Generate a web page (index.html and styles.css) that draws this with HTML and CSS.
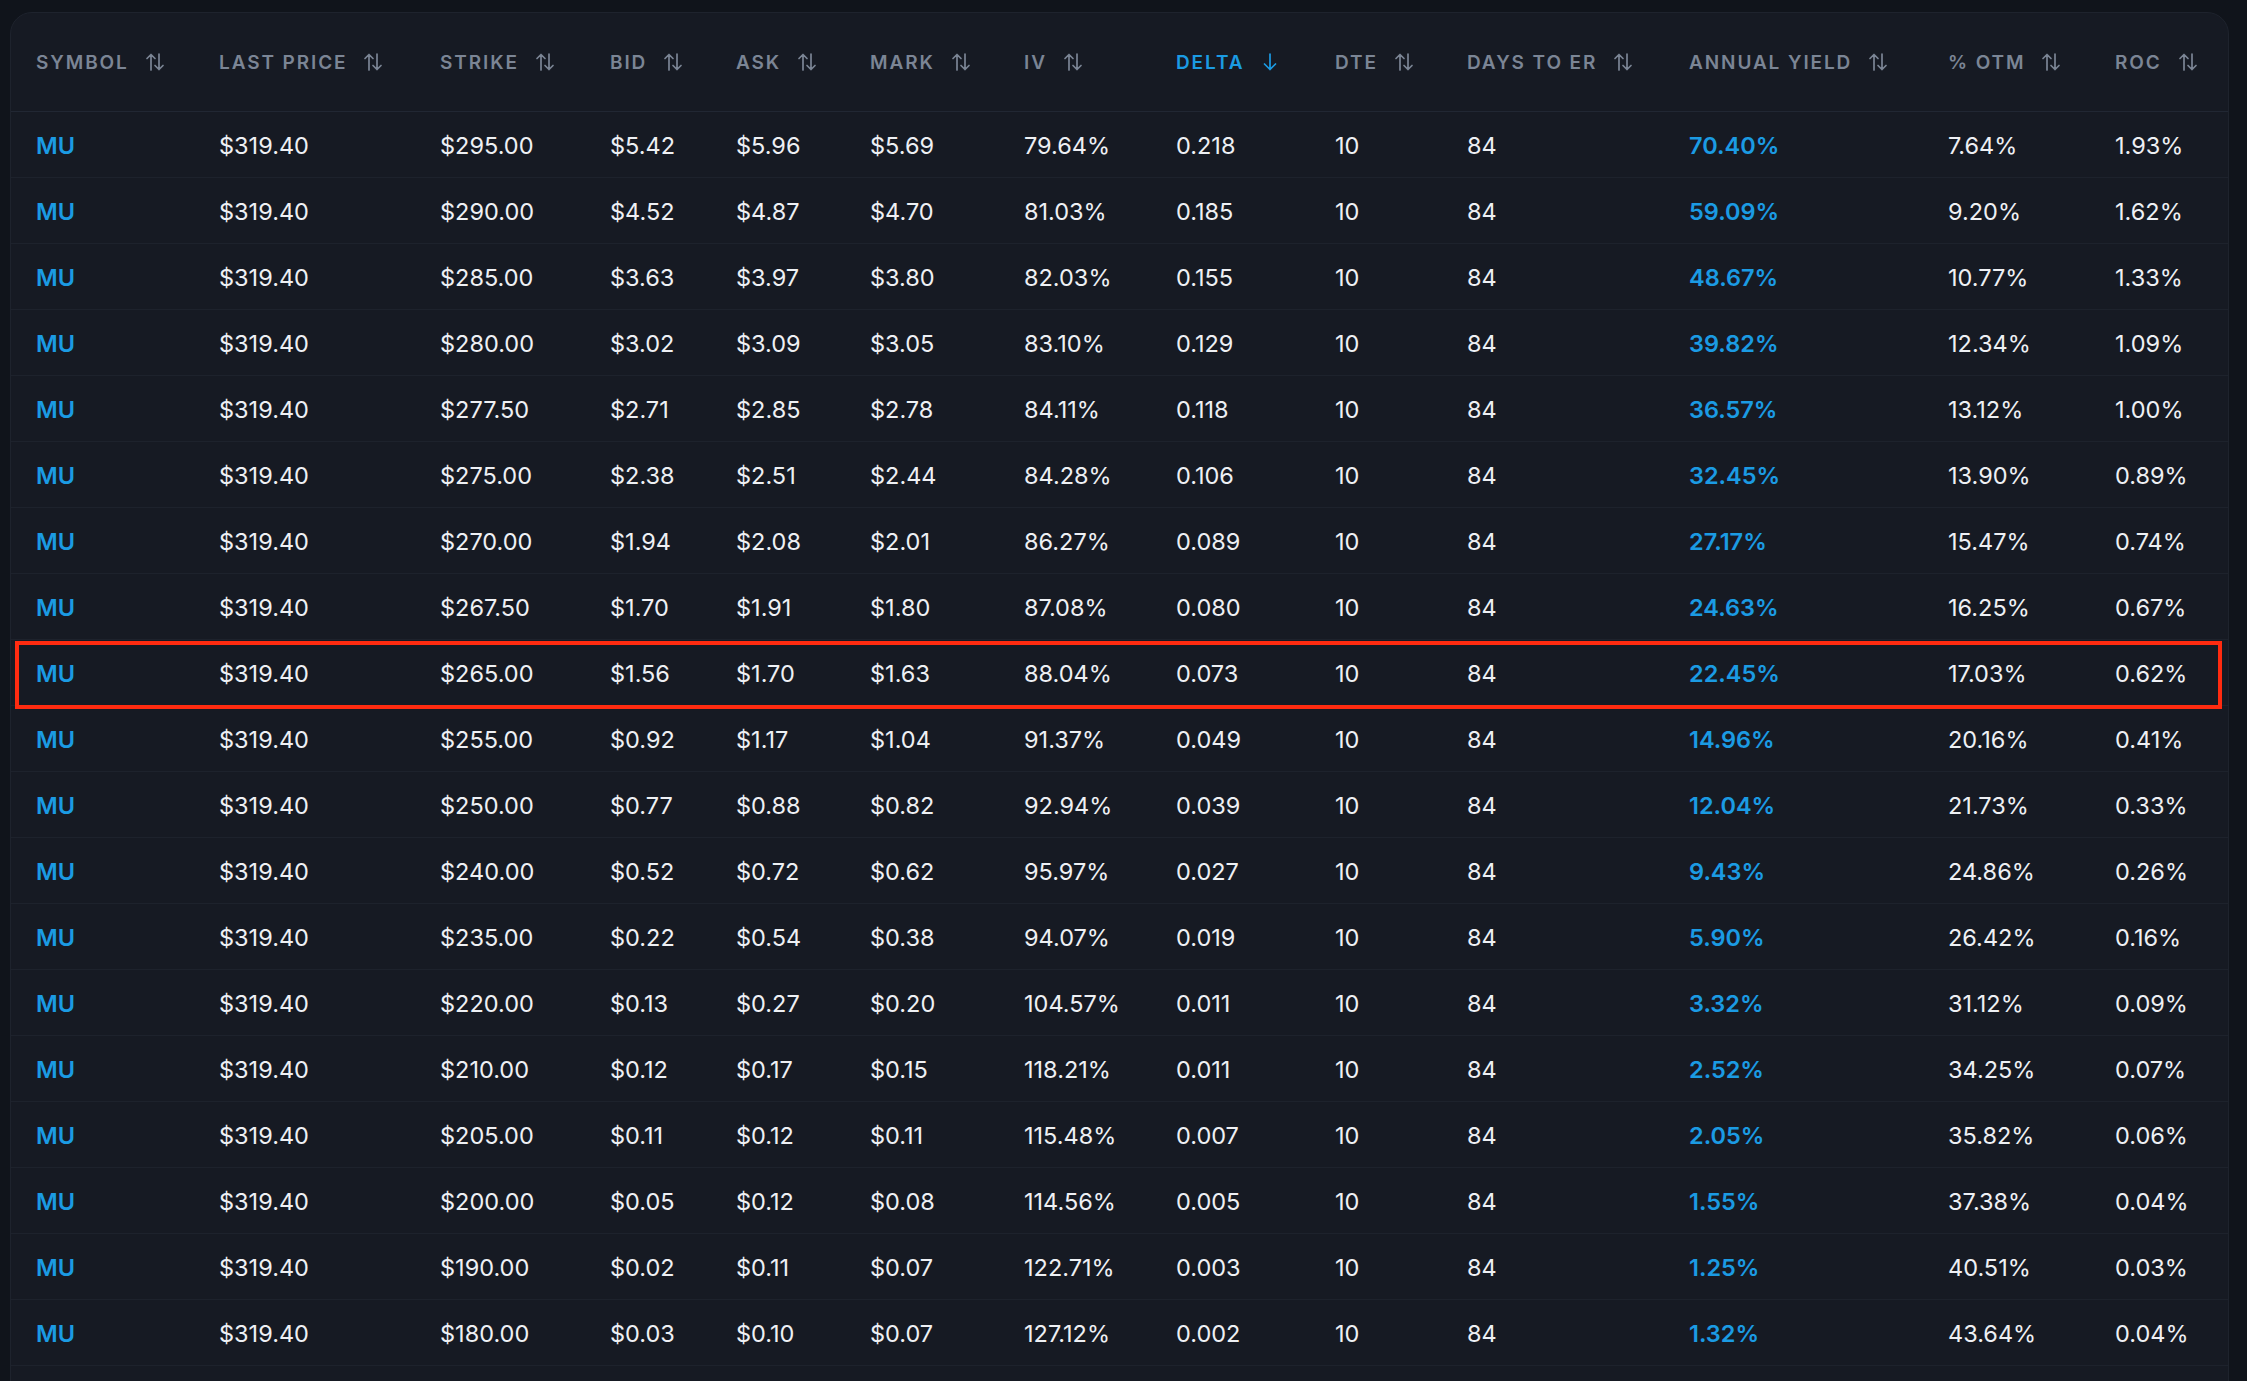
FILE: index.html
```html
<!DOCTYPE html>
<html lang="en">
<head>
    <meta charset="UTF-8">
    <meta name="viewport" content="width=device-width, initial-scale=1.0">
    <title>Option Chain</title>
    <link rel="stylesheet" href="styles.css">
</head>
<body>
    <div class="card">
        <div class="row head">
            <div class="cell">SYMBOL <svg class="sort" viewBox="0 0 20 18"><path d="M6 17V1.5M2 5.5l4-4 4 4M14 1v15.5M10 12.5l4 4 4-4"/></svg></div>
            <div class="cell">LAST PRICE <svg class="sort" viewBox="0 0 20 18"><path d="M6 17V1.5M2 5.5l4-4 4 4M14 1v15.5M10 12.5l4 4 4-4"/></svg></div>
            <div class="cell">STRIKE <svg class="sort" viewBox="0 0 20 18"><path d="M6 17V1.5M2 5.5l4-4 4 4M14 1v15.5M10 12.5l4 4 4-4"/></svg></div>
            <div class="cell">BID <svg class="sort" viewBox="0 0 20 18"><path d="M6 17V1.5M2 5.5l4-4 4 4M14 1v15.5M10 12.5l4 4 4-4"/></svg></div>
            <div class="cell">ASK <svg class="sort" viewBox="0 0 20 18"><path d="M6 17V1.5M2 5.5l4-4 4 4M14 1v15.5M10 12.5l4 4 4-4"/></svg></div>
            <div class="cell">MARK <svg class="sort" viewBox="0 0 20 18"><path d="M6 17V1.5M2 5.5l4-4 4 4M14 1v15.5M10 12.5l4 4 4-4"/></svg></div>
            <div class="cell">IV <svg class="sort" viewBox="0 0 20 18"><path d="M6 17V1.5M2 5.5l4-4 4 4M14 1v15.5M10 12.5l4 4 4-4"/></svg></div>
            <div class="cell active">DELTA <svg class="sort" viewBox="0 0 20 18"><path d="M10 1v15.5M4.5 11l5.5 5.5 5.5-5.5"/></svg></div>
            <div class="cell">DTE <svg class="sort" viewBox="0 0 20 18"><path d="M6 17V1.5M2 5.5l4-4 4 4M14 1v15.5M10 12.5l4 4 4-4"/></svg></div>
            <div class="cell">DAYS TO ER <svg class="sort" viewBox="0 0 20 18"><path d="M6 17V1.5M2 5.5l4-4 4 4M14 1v15.5M10 12.5l4 4 4-4"/></svg></div>
            <div class="cell">ANNUAL YIELD <svg class="sort" viewBox="0 0 20 18"><path d="M6 17V1.5M2 5.5l4-4 4 4M14 1v15.5M10 12.5l4 4 4-4"/></svg></div>
            <div class="cell">% OTM <svg class="sort" viewBox="0 0 20 18"><path d="M6 17V1.5M2 5.5l4-4 4 4M14 1v15.5M10 12.5l4 4 4-4"/></svg></div>
            <div class="cell">ROC <svg class="sort" viewBox="0 0 20 18"><path d="M6 17V1.5M2 5.5l4-4 4 4M14 1v15.5M10 12.5l4 4 4-4"/></svg></div>
        </div>

        <div class="row"><div class="cell sym">MU</div><div class="cell">$319.40</div><div class="cell">$295.00</div><div class="cell">$5.42</div><div class="cell">$5.96</div><div class="cell">$5.69</div><div class="cell">79.64%</div><div class="cell">0.218</div><div class="cell">10</div><div class="cell">84</div><div class="cell yield">70.40%</div><div class="cell">7.64%</div><div class="cell">1.93%</div></div>
        <div class="row"><div class="cell sym">MU</div><div class="cell">$319.40</div><div class="cell">$290.00</div><div class="cell">$4.52</div><div class="cell">$4.87</div><div class="cell">$4.70</div><div class="cell">81.03%</div><div class="cell">0.185</div><div class="cell">10</div><div class="cell">84</div><div class="cell yield">59.09%</div><div class="cell">9.20%</div><div class="cell">1.62%</div></div>
        <div class="row"><div class="cell sym">MU</div><div class="cell">$319.40</div><div class="cell">$285.00</div><div class="cell">$3.63</div><div class="cell">$3.97</div><div class="cell">$3.80</div><div class="cell">82.03%</div><div class="cell">0.155</div><div class="cell">10</div><div class="cell">84</div><div class="cell yield">48.67%</div><div class="cell">10.77%</div><div class="cell">1.33%</div></div>
        <div class="row"><div class="cell sym">MU</div><div class="cell">$319.40</div><div class="cell">$280.00</div><div class="cell">$3.02</div><div class="cell">$3.09</div><div class="cell">$3.05</div><div class="cell">83.10%</div><div class="cell">0.129</div><div class="cell">10</div><div class="cell">84</div><div class="cell yield">39.82%</div><div class="cell">12.34%</div><div class="cell">1.09%</div></div>
        <div class="row"><div class="cell sym">MU</div><div class="cell">$319.40</div><div class="cell">$277.50</div><div class="cell">$2.71</div><div class="cell">$2.85</div><div class="cell">$2.78</div><div class="cell">84.11%</div><div class="cell">0.118</div><div class="cell">10</div><div class="cell">84</div><div class="cell yield">36.57%</div><div class="cell">13.12%</div><div class="cell">1.00%</div></div>
        <div class="row"><div class="cell sym">MU</div><div class="cell">$319.40</div><div class="cell">$275.00</div><div class="cell">$2.38</div><div class="cell">$2.51</div><div class="cell">$2.44</div><div class="cell">84.28%</div><div class="cell">0.106</div><div class="cell">10</div><div class="cell">84</div><div class="cell yield">32.45%</div><div class="cell">13.90%</div><div class="cell">0.89%</div></div>
        <div class="row"><div class="cell sym">MU</div><div class="cell">$319.40</div><div class="cell">$270.00</div><div class="cell">$1.94</div><div class="cell">$2.08</div><div class="cell">$2.01</div><div class="cell">86.27%</div><div class="cell">0.089</div><div class="cell">10</div><div class="cell">84</div><div class="cell yield">27.17%</div><div class="cell">15.47%</div><div class="cell">0.74%</div></div>
        <div class="row"><div class="cell sym">MU</div><div class="cell">$319.40</div><div class="cell">$267.50</div><div class="cell">$1.70</div><div class="cell">$1.91</div><div class="cell">$1.80</div><div class="cell">87.08%</div><div class="cell">0.080</div><div class="cell">10</div><div class="cell">84</div><div class="cell yield">24.63%</div><div class="cell">16.25%</div><div class="cell">0.67%</div></div>
        <div class="row picked"><div class="cell sym">MU</div><div class="cell">$319.40</div><div class="cell">$265.00</div><div class="cell">$1.56</div><div class="cell">$1.70</div><div class="cell">$1.63</div><div class="cell">88.04%</div><div class="cell">0.073</div><div class="cell">10</div><div class="cell">84</div><div class="cell yield">22.45%</div><div class="cell">17.03%</div><div class="cell">0.62%</div></div>
        <div class="row"><div class="cell sym">MU</div><div class="cell">$319.40</div><div class="cell">$255.00</div><div class="cell">$0.92</div><div class="cell">$1.17</div><div class="cell">$1.04</div><div class="cell">91.37%</div><div class="cell">0.049</div><div class="cell">10</div><div class="cell">84</div><div class="cell yield">14.96%</div><div class="cell">20.16%</div><div class="cell">0.41%</div></div>
        <div class="row"><div class="cell sym">MU</div><div class="cell">$319.40</div><div class="cell">$250.00</div><div class="cell">$0.77</div><div class="cell">$0.88</div><div class="cell">$0.82</div><div class="cell">92.94%</div><div class="cell">0.039</div><div class="cell">10</div><div class="cell">84</div><div class="cell yield">12.04%</div><div class="cell">21.73%</div><div class="cell">0.33%</div></div>
        <div class="row"><div class="cell sym">MU</div><div class="cell">$319.40</div><div class="cell">$240.00</div><div class="cell">$0.52</div><div class="cell">$0.72</div><div class="cell">$0.62</div><div class="cell">95.97%</div><div class="cell">0.027</div><div class="cell">10</div><div class="cell">84</div><div class="cell yield">9.43%</div><div class="cell">24.86%</div><div class="cell">0.26%</div></div>
        <div class="row"><div class="cell sym">MU</div><div class="cell">$319.40</div><div class="cell">$235.00</div><div class="cell">$0.22</div><div class="cell">$0.54</div><div class="cell">$0.38</div><div class="cell">94.07%</div><div class="cell">0.019</div><div class="cell">10</div><div class="cell">84</div><div class="cell yield">5.90%</div><div class="cell">26.42%</div><div class="cell">0.16%</div></div>
        <div class="row"><div class="cell sym">MU</div><div class="cell">$319.40</div><div class="cell">$220.00</div><div class="cell">$0.13</div><div class="cell">$0.27</div><div class="cell">$0.20</div><div class="cell">104.57%</div><div class="cell">0.011</div><div class="cell">10</div><div class="cell">84</div><div class="cell yield">3.32%</div><div class="cell">31.12%</div><div class="cell">0.09%</div></div>
        <div class="row"><div class="cell sym">MU</div><div class="cell">$319.40</div><div class="cell">$210.00</div><div class="cell">$0.12</div><div class="cell">$0.17</div><div class="cell">$0.15</div><div class="cell">118.21%</div><div class="cell">0.011</div><div class="cell">10</div><div class="cell">84</div><div class="cell yield">2.52%</div><div class="cell">34.25%</div><div class="cell">0.07%</div></div>
        <div class="row"><div class="cell sym">MU</div><div class="cell">$319.40</div><div class="cell">$205.00</div><div class="cell">$0.11</div><div class="cell">$0.12</div><div class="cell">$0.11</div><div class="cell">115.48%</div><div class="cell">0.007</div><div class="cell">10</div><div class="cell">84</div><div class="cell yield">2.05%</div><div class="cell">35.82%</div><div class="cell">0.06%</div></div>
        <div class="row"><div class="cell sym">MU</div><div class="cell">$319.40</div><div class="cell">$200.00</div><div class="cell">$0.05</div><div class="cell">$0.12</div><div class="cell">$0.08</div><div class="cell">114.56%</div><div class="cell">0.005</div><div class="cell">10</div><div class="cell">84</div><div class="cell yield">1.55%</div><div class="cell">37.38%</div><div class="cell">0.04%</div></div>
        <div class="row"><div class="cell sym">MU</div><div class="cell">$319.40</div><div class="cell">$190.00</div><div class="cell">$0.02</div><div class="cell">$0.11</div><div class="cell">$0.07</div><div class="cell">122.71%</div><div class="cell">0.003</div><div class="cell">10</div><div class="cell">84</div><div class="cell yield">1.25%</div><div class="cell">40.51%</div><div class="cell">0.03%</div></div>
        <div class="row"><div class="cell sym">MU</div><div class="cell">$319.40</div><div class="cell">$180.00</div><div class="cell">$0.03</div><div class="cell">$0.10</div><div class="cell">$0.07</div><div class="cell">127.12%</div><div class="cell">0.002</div><div class="cell">10</div><div class="cell">84</div><div class="cell yield">1.32%</div><div class="cell">43.64%</div><div class="cell">0.04%</div></div>
    </div>
</body>
</html>
```

FILE: styles.css
```css
html, body {
    height: 100%;
}
body {
    margin: 0;
    padding: 12px 18px 0 10px;
    background-color: #10141b;
    font-family: Inter, "Noto Sans", sans-serif;
    overflow: hidden;
}
.card {
    background-color: #161a23;
    border: 1px solid #1e232d;
    border-radius: 22px;
    padding-bottom: 60px;
}
.row {
    position: relative;
    display: grid;
    grid-template-columns: 183px 221px 170px 126px 134px 154px 152px 159px 132px 222px 259px 167px 1fr;
    align-items: center;
    height: 66px;
    box-sizing: border-box;
    border-bottom: 1px solid #1d222c;
}
.row.head {
    height: 99px;
    border-bottom-color: #212733;
}
.cell {
    padding-left: 25px;
    padding-top: 2px;
    font-size: 23.5px;
    color: #eef0f4;
    white-space: nowrap;
}
.head .cell {
    display: flex;
    align-items: center;
    gap: 16px;
    padding-top: 0;
    font-size: 19px;
    font-weight: 600;
    letter-spacing: 0.1em;
    color: #7b8595;
}
.head .cell.active {
    color: #1b9be3;
}
.sort {
    width: 20px;
    height: 18px;
    fill: none;
    stroke: currentColor;
    stroke-width: 1.7;
    stroke-linecap: round;
    stroke-linejoin: round;
}
.cell.sym, .cell.yield {
    color: #1b9be3;
    font-weight: 600;
}
.row.picked::after {
    content: "";
    position: absolute;
    top: 1px;
    bottom: -4px;
    left: 4px;
    right: 6px;
    border: 4px solid #ff2b10;
    pointer-events: none;
}
```
